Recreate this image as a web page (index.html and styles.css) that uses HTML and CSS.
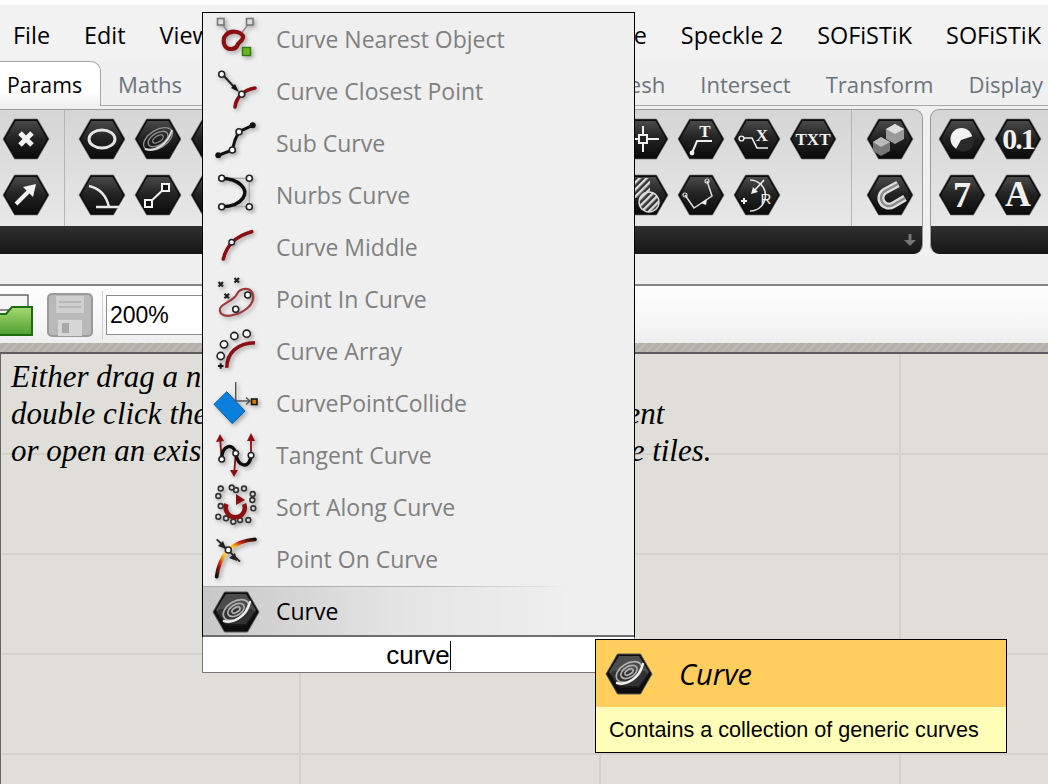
FILE: index.html
```html
<!DOCTYPE html>
<html lang="en">
<head>
    <meta charset="UTF-8">
    <title>Grasshopper</title>
    <link rel="stylesheet" href="styles.css">
</head>
<body>

    <svg class="defs" width="0" height="0">
        <defs>
            <linearGradient id="hexFill" x1="0" y1="0" x2="0" y2="1">
                <stop offset="0" stop-color="#4a4a4a"/>
                <stop offset="0.45" stop-color="#242424"/>
                <stop offset="1" stop-color="#0c0c0c"/>
            </linearGradient>
            <linearGradient id="folderFill" x1="0" y1="0" x2="0" y2="1">
                <stop offset="0" stop-color="#a6d873"/>
                <stop offset="1" stop-color="#4f9f31"/>
            </linearGradient>
            <linearGradient id="hotA" x1="0" y1="1" x2="1" y2="0">
                <stop offset="0" stop-color="#111"/>
                <stop offset="0.35" stop-color="#c21a10"/>
                <stop offset="0.65" stop-color="#f7b013"/>
                <stop offset="1" stop-color="#fff8c0"/>
            </linearGradient>
            <linearGradient id="hotB" x1="0" y1="1" x2="1" y2="0">
                <stop offset="0" stop-color="#fff8c0"/>
                <stop offset="0.3" stop-color="#f7b013"/>
                <stop offset="0.6" stop-color="#c21a10"/>
                <stop offset="1" stop-color="#111"/>
            </linearGradient>
            <pattern id="hatch" width="5" height="5" patternUnits="userSpaceOnUse" patternTransform="rotate(-45)">
                <rect width="5" height="5" fill="#333"/>
                <rect width="5" height="2.4" fill="#ddd"/>
            </pattern>
            <symbol id="hex" viewBox="0 0 48 42">
                <polygon points="1,21 12.5,1 35.5,1 47,21 35.5,41 12.5,41" fill="#0b0b0b" stroke="#6d6d6d" stroke-width="1" stroke-linejoin="round" stroke-opacity=".6"/>
                <polygon points="3,21 13.5,3 34.5,3 45,21 34.5,39 13.5,39" fill="url(#hexFill)"/>
            </symbol>
            <symbol id="curveHex" viewBox="0 0 48 42">
                <polygon points="1,21 12.5,1 35.5,1 47,21 35.5,41 12.5,41" fill="#0d0d0d" stroke="#555" stroke-width="1" stroke-linejoin="round"/>
                <polygon points="4,19 14,3 34,3 44,19 34,33 14,33" fill="#4c4c4c"/>
                <polygon points="4,22 14,35 34,35 44,22 40,18 8,18" fill="#222" opacity=".6"/>
                <g fill="none" stroke="#b0b0b0" stroke-width="1.7" transform="rotate(-32 24 19)">
                    <ellipse cx="24" cy="19" rx="14" ry="8.5"/>
                    <ellipse cx="24" cy="19" rx="9" ry="5.4"/>
                    <ellipse cx="24" cy="19" rx="4.5" ry="2.4"/>
                </g>
                <path d="M12 30 C22 33 34 25 38 11" fill="none" stroke="#f0f0f0" stroke-width="2.4" stroke-linecap="round"/>
            </symbol>
        </defs>
    </svg>

    <div class="top-strip"></div>

    <div class="menubar">
        <span>File</span>
        <span>Edit</span>
        <span>View</span>
        <span class="menu-right">e</span>
        <span>Speckle 2</span>
        <span>SOFiSTiK</span>
        <span>SOFiSTiK</span>
    </div>

    <div class="tabs">
        <span class="tab active">Params</span>
        <span class="tab">Maths</span>
        <span class="tab tab-right">Mesh</span>
        <span class="tab">Intersect</span>
        <span class="tab">Transform</span>
        <span class="tab">Display</span>
    </div>

    <div class="ribbon">
        <div class="panel panel-main">
            <div class="panel-body">
                <div class="group group-first">
                    <svg class="hex" viewBox="0 0 48 42"><use href="#hex"/><path d="M18 15 L30 27 M30 15 L18 27" stroke="#f2f2f2" stroke-width="5"/></svg>
                    <svg class="hex" viewBox="0 0 48 42"><use href="#hex"/><path d="M14 30 L29 15" stroke="#f2f2f2" stroke-width="4"/><polygon points="34,10 31,23 21,13" fill="#f2f2f2"/></svg>
                </div>
                <div class="group group-sep">
                    <svg class="hex" viewBox="0 0 48 42"><use href="#hex"/><ellipse cx="24" cy="21" rx="13" ry="9" fill="none" stroke="#e4e4e4" stroke-width="3"/></svg>
                    <svg class="hex" viewBox="0 0 48 42"><use href="#hex"/><path d="M11 12 C20 14 28 20 31 33 M18 33 H43" fill="none" stroke="#e8e8e8" stroke-width="2.5"/></svg>
                    <svg class="hex" viewBox="0 0 48 42"><use href="#hex"/><g fill="none" stroke="#8f8f8f" stroke-width="1.3" transform="rotate(-32 24 21)"><ellipse cx="24" cy="21" rx="16" ry="9"/><ellipse cx="24" cy="21" rx="11" ry="6"/><ellipse cx="24" cy="21" rx="6" ry="3"/></g><path d="M11 31 C22 34 34 26 38 12" fill="none" stroke="#ddd" stroke-width="2"/></svg>
                    <svg class="hex" viewBox="0 0 48 42"><use href="#hex"/><path d="M15 29 L31 14" stroke="#f2f2f2" stroke-width="2"/><rect x="11" y="26" width="7" height="7" fill="#111" stroke="#f2f2f2" stroke-width="2"/><rect x="28" y="10" width="7" height="7" fill="#111" stroke="#f2f2f2" stroke-width="2"/></svg>
                    <svg class="hex" viewBox="0 0 48 42"><use href="#hex"/></svg>
                    <svg class="hex" viewBox="0 0 48 42"><use href="#hex"/></svg>
                </div>
                <div class="group group-tail">
                    <svg class="hex" viewBox="0 0 48 42"><use href="#hex"/><path d="M22 8 V34 M8 21 H38" stroke="#eee" stroke-width="2"/><rect x="18" y="17" width="8" height="8" fill="#222" stroke="#eee" stroke-width="2"/></svg>
                    <svg class="hex" viewBox="0 0 48 42"><use href="#hex"/><rect x="12" y="4" width="17" height="20" fill="url(#hatch)"/><circle cx="28" cy="28" r="10" fill="url(#hatch)" stroke="#ddd" stroke-width="1.4"/></svg>
                    <svg class="hex" viewBox="0 0 48 42"><use href="#hex"/><path d="M15 35 L20 23 H35" fill="none" stroke="#eee" stroke-width="2"/><circle cx="15" cy="35" r="2.4" fill="#eee"/><text x="28" y="19" class="glyph glyph-t">T</text></svg>
                    <svg class="hex" viewBox="0 0 48 42"><use href="#hex"/><path d="M30 7 L35 22 L17 34 L8 21" fill="none" stroke="#ddd" stroke-width="1.5"/><circle cx="30" cy="7" r="2" fill="none" stroke="#ddd" stroke-width="1.2"/><circle cx="8" cy="21" r="2" fill="none" stroke="#ddd" stroke-width="1.2"/><polygon points="24,29 30,25 29,31" fill="#eee"/></svg>
                    <svg class="hex" viewBox="0 0 48 42"><use href="#hex"/><path d="M11 20 H19 L24 30 H35" fill="none" stroke="#eee" stroke-width="1.6"/><circle cx="8.5" cy="20.5" r="2.4" fill="none" stroke="#eee" stroke-width="1.4"/><text x="29" y="23" class="glyph glyph-t">X</text></svg>
                    <svg class="hex" viewBox="0 0 48 42"><use href="#hex"/><path d="M17 6 A15 15 0 0 1 17 37" fill="none" stroke="#ddd" stroke-width="1.6"/><path d="M31 6 L21 17" stroke="#eee" stroke-width="1.6"/><polygon points="18,20 20,13 25,18" fill="#eee"/><path d="M8 27 H14 M11 24 V30" stroke="#eee" stroke-width="2"/><text x="33" y="30" class="glyph glyph-r">R</text></svg>
                    <svg class="hex" viewBox="0 0 48 42"><use href="#hex"/><text x="24" y="27" class="glyph glyph-txt">TXT</text></svg>
                </div>
                <div class="group group-one">
                    <svg class="hex" viewBox="0 0 48 42"><use href="#hex"/><polygon points="29,6 38,11 38,21 29,26 20,21 20,11" fill="#9a9a9a"/><polygon points="29,6 38,11 29,16 20,11" fill="#ddd"/><polygon points="15,19 24,24 24,33 15,38 7,33 7,24" fill="#777"/><polygon points="15,19 24,24 15,29 7,24" fill="#bbb"/></svg>
                    <svg class="hex" viewBox="0 0 48 42"><use href="#hex"/><path d="M32 10 L19 17 A8 8 0 0 0 27 31 L39 24" fill="none" stroke="#ddd" stroke-width="7"/><path d="M32 10 L19 17 A8 8 0 0 0 27 31 L39 24" fill="none" stroke="#8a8a8a" stroke-width="2.5"/></svg>
                </div>
            </div>
            <div class="panel-foot">
                <svg class="foot-arrow" viewBox="0 0 14 14"><path d="M7 1 V8" stroke="#777" stroke-width="3"/><polygon points="1,7 13,7 7,13" fill="#777"/></svg>
            </div>
        </div>
        <div class="panel panel-input">
            <div class="panel-body">
                <div class="group">
                    <svg class="hex" viewBox="0 0 48 42"><use href="#hex"/><circle cx="23.5" cy="21" r="11" fill="#f2f2f2"/><path d="M35 18 L23 22 L18 31 A11 11 0 0 0 35 18 Z" fill="#2a2a2a"/></svg>
                    <svg class="hex" viewBox="0 0 48 42"><use href="#hex"/><text x="24" y="33" class="glyph glyph-big">7</text></svg>
                    <svg class="hex" viewBox="0 0 48 42"><use href="#hex"/><text x="24" y="31" class="glyph glyph-num">0.1</text></svg>
                    <svg class="hex" viewBox="0 0 48 42"><use href="#hex"/><text x="24" y="32" class="glyph glyph-big">A</text></svg>
                </div>
            </div>
            <div class="panel-foot"></div>
        </div>
    </div>

    <div class="toolbar">
        <svg class="tool-icon folder" viewBox="0 0 36 42">
            <path d="M-4 1 H30 V16 H-4 Z" fill="#f6f6f6" stroke="#666" stroke-width="1.5"/>
            <path d="M-4 20 H8 L14 13 H34 V41 H-4 Z" fill="url(#folderFill)" stroke="#1d6b12" stroke-width="2"/>
        </svg>
        <svg class="tool-icon save" viewBox="0 0 46 44">
            <rect x="1" y="1" width="44" height="42" rx="4" fill="#b9b9b9" stroke="#9a9a9a" stroke-width="2"/>
            <rect x="9" y="3" width="28" height="17" fill="#cfcfcf"/>
            <path d="M12 9 H34 M12 14 H34" stroke="#b0b0b0" stroke-width="1.5"/>
            <rect x="11" y="27" width="24" height="16" fill="#d6d6d6"/>
            <rect x="15" y="30" width="7" height="10" fill="#a8a8a8"/>
        </svg>
        <div class="tool-sep"></div>
        <div class="zoom-box">200%</div>
    </div>
    <div class="hatch"></div>

    <div class="canvas">
        <p class="hint">Either drag a new component onto the canvas,</p>
        <p class="hint">double click the canvas to find and add a component</p>
        <p class="hint">or open an existing document by dropping it on the tiles.</p>
    </div>

    <div class="finder">
        <div class="results">
            <div class="result">
                <svg class="result-icon" viewBox="0 0 48 48">
                    <path d="M8 7 L17 20 M37 7 L27 20" stroke="#8d8d8d" stroke-width="1.5"/>
                    <rect x="4.5" y="3.5" width="6.5" height="6.5" fill="#ddd" stroke="#777" stroke-width="1.6"/>
                    <rect x="33.5" y="3.5" width="6.5" height="6.5" fill="#ddd" stroke="#777" stroke-width="1.6"/>
                    <path d="M18 34 C10 34 9 24 13 20 C17 15 27 16 30 21 C31 25 26 27 25 29 C24 32 22 34 18 34 Z" fill="none" stroke="#8a0f12" stroke-width="4.2"/>
                    <rect x="29.5" y="32.5" width="8" height="8" fill="#6fb51e" stroke="#2f7a10" stroke-width="1.4"/>
                </svg>
                <span>Curve Nearest Object</span>
            </div>
            <div class="result">
                <svg class="result-icon" viewBox="0 0 48 48">
                    <path d="M9 7 L23 22" stroke="#222" stroke-width="2"/>
                    <polygon points="26,25 18,21 22,17" fill="#111"/>
                    <path d="M22 40 C23 31 30 23 42 21" fill="none" stroke="#8a0f12" stroke-width="3.6" stroke-linecap="round"/>
                    <circle cx="8.7" cy="7.3" r="3" fill="#fff" stroke="#222" stroke-width="1.6"/>
                    <circle cx="28.7" cy="27.3" r="3" fill="#fff" stroke="#222" stroke-width="1.6"/>
                </svg>
                <span>Curve Closest Point</span>
            </div>
            <div class="result">
                <svg class="result-icon" viewBox="0 0 48 48">
                    <path d="M5.3 36.3 L19.3 31 L22 21 L26 12.7 L39.7 6.3" fill="none" stroke="#111" stroke-width="3"/>
                    <circle cx="5.3" cy="36.3" r="3" fill="#111"/>
                    <circle cx="39.7" cy="6.3" r="3" fill="#111"/>
                    <circle cx="19.3" cy="31" r="3" fill="#fff" stroke="#222" stroke-width="1.6"/>
                    <circle cx="26" cy="12.7" r="3" fill="#fff" stroke="#222" stroke-width="1.6"/>
                </svg>
                <span>Sub Curve</span>
            </div>
            <div class="result">
                <svg class="result-icon" viewBox="0 0 48 48">
                    <path d="M8.7 7.3 H36.3 V35.7 H8.7" fill="none" stroke="#a5a5a5" stroke-width="1.2"/>
                    <path d="M8.7 7.3 C26 8 36 18 30 27 C26 33 17 35.7 8.7 35.7" fill="none" stroke="#0c0c0c" stroke-width="3.4"/>
                    <circle cx="8.7" cy="7.3" r="3" fill="#fff" stroke="#222" stroke-width="1.6"/>
                    <circle cx="36.3" cy="7.3" r="3" fill="#fff" stroke="#222" stroke-width="1.6"/>
                    <circle cx="8.7" cy="35.7" r="3" fill="#fff" stroke="#222" stroke-width="1.6"/>
                    <circle cx="36.3" cy="35.7" r="3" fill="#fff" stroke="#222" stroke-width="1.6"/>
                </svg>
                <span>Nurbs Curve</span>
            </div>
            <div class="result">
                <svg class="result-icon" viewBox="0 0 48 48">
                    <path d="M10.3 36 C13 24 22 13 38.7 8.7" fill="none" stroke="#8a0f12" stroke-width="3.6" stroke-linecap="round"/>
                    <circle cx="18.7" cy="19.3" r="2.8" fill="#fff" stroke="#222" stroke-width="1.5"/>
                </svg>
                <span>Curve Middle</span>
            </div>
            <div class="result">
                <svg class="result-icon" viewBox="0 0 48 48">
                    <path d="M5.5 6 L10 10.5 M10 6 L5.5 10.5 M21.5 2 L26 6.5 M26 2 L21.5 6.5 M11.5 17.8 L16 22.3 M16 17.8 L11.5 22.3" stroke="#222" stroke-width="2.2"/>
                    <path d="M7 33 C8 27 20 26 24 18 C27 12 38 10 40 19 C42 29 30 37 20 39 C13 41 6 39 7 33 Z" fill="none" stroke="#9c3a3c" stroke-width="2.2"/>
                    <circle cx="34.7" cy="19" r="3" fill="#fff" stroke="#222" stroke-width="1.6"/>
                    <circle cx="22.7" cy="33.3" r="3" fill="#fff" stroke="#222" stroke-width="1.6"/>
                </svg>
                <span>Point In Curve</span>
            </div>
            <div class="result">
                <svg class="result-icon" viewBox="0 0 48 48">
                    <path d="M13.7 39.7 C14 25 24 15 42 14.7" fill="none" stroke="#8a0f12" stroke-width="3.6"/>
                    <circle cx="7.7" cy="28" r="3.6" fill="#fff" stroke="#222" stroke-width="1.6"/>
                    <circle cx="11" cy="16.3" r="3.6" fill="#fff" stroke="#222" stroke-width="1.6"/>
                    <circle cx="21.3" cy="8" r="3.6" fill="#fff" stroke="#222" stroke-width="1.6"/>
                    <circle cx="33.7" cy="5.7" r="3.6" fill="#fff" stroke="#222" stroke-width="1.6"/>
                    <path d="M5 38 H10.5 M7.7 35.3 V40.7" stroke="#111" stroke-width="2"/>
                </svg>
                <span>Curve Array</span>
            </div>
            <div class="result">
                <svg class="result-icon" viewBox="0 0 48 48">
                    <polygon points="1,24.3 13.7,11.7 32,31 19.3,43.7" fill="#0a7fdc" stroke="#0b5ea3" stroke-width="1"/>
                    <path d="M22.7 2 V21 H37 M33 17.5 L37 21 L33 24.5" fill="none" stroke="#555" stroke-width="1.4"/>
                    <rect x="38.5" y="19" width="5.5" height="5.5" fill="#d97a0c" stroke="#111" stroke-width="1.5"/>
                </svg>
                <span>CurvePointCollide</span>
            </div>
            <div class="result">
                <svg class="result-icon" viewBox="0 0 48 48">
                    <path d="M7 5 L8.7 27 M38 3 V23 M22.7 21 L21.3 41" stroke="#8a0f12" stroke-width="1.8"/>
                    <polygon points="7,2 3,10 11,9" fill="#8a0f12"/>
                    <polygon points="38,1 34,9 42,9" fill="#8a0f12"/>
                    <polygon points="21,45 17,38 25,38" fill="#8a0f12"/>
                    <path d="M8.7 27.3 C9 12 21 11 22.7 21.3 C24 35 37 38 38 23.3" fill="none" stroke="#0c0c0c" stroke-width="3.4"/>
                    <circle cx="8.7" cy="27.3" r="2.8" fill="#fff" stroke="#222" stroke-width="1.5"/>
                    <circle cx="22.7" cy="21.3" r="2.8" fill="#fff" stroke="#222" stroke-width="1.5"/>
                    <circle cx="38" cy="23.3" r="2.8" fill="#fff" stroke="#222" stroke-width="1.5"/>
                </svg>
                <span>Tangent Curve</span>
            </div>
            <div class="result">
                <svg class="result-icon" viewBox="0 0 48 48">
                    <g fill="#ddd" stroke="#333" stroke-width="1.6">
                        <circle cx="7.7" cy="4.5" r="2.4"/><circle cx="5.3" cy="12" r="2.4"/><circle cx="7.7" cy="22" r="2.4"/><circle cx="5.3" cy="32.7" r="2.4"/><circle cx="13" cy="34.3" r="2.4"/><circle cx="20.3" cy="37.7" r="2.4"/><circle cx="27" cy="36" r="2.4"/><circle cx="35.3" cy="36" r="2.4"/><circle cx="40.3" cy="24.3" r="2.4"/><circle cx="39.3" cy="16" r="2.4"/><circle cx="39.7" cy="10" r="2.4"/><circle cx="31" cy="4.5" r="2.4"/><circle cx="23" cy="6" r="2.4"/><circle cx="18.7" cy="3.5" r="2.4"/>
                    </g>
                    <path d="M13.5 20 A9.5 9.5 0 1 0 31 20" fill="none" stroke="#8a0f12" stroke-width="4.6"/>
                    <polygon points="23,10 32,16 23,21" fill="#8a0f12"/>
                </svg>
                <span>Sort Along Curve</span>
            </div>
            <div class="result">
                <svg class="result-icon" viewBox="0 0 48 48">
                    <path d="M3.7 40.7 C5 30 9 21 15.3 14" fill="none" stroke="url(#hotA)" stroke-width="3.8" stroke-linecap="round"/>
                    <path d="M15.3 14 C22 8 32 4 42 3.3" fill="none" stroke="url(#hotB)" stroke-width="3.8" stroke-linecap="round"/>
                    <path d="M3.7 3.3 L27 25.7" stroke="#222" stroke-width="1.8"/>
                    <polygon points="10,5 13,13 5,10" fill="#222"/>
                    <polygon points="22,17 24,25 16,22" fill="#222"/>
                    <circle cx="15.3" cy="14" r="3" fill="#fff" stroke="#222" stroke-width="1.5"/>
                </svg>
                <span>Point On Curve</span>
            </div>
            <div class="result selected">
                <svg class="result-icon" viewBox="0 0 48 42"><use href="#curveHex"/></svg>
                <span>Curve</span>
            </div>
        </div>
        <div class="search">curve<span class="caret"></span></div>
    </div>

    <div class="tip">
        <div class="tip-head">
            <svg class="tip-icon" viewBox="0 0 48 42"><use href="#curveHex"/></svg>
            <span class="tip-title">Curve</span>
        </div>
        <div class="tip-body">Contains a collection of generic curves</div>
    </div>

</body>
</html>
```

FILE: styles.css
```css
html, body {
    height: 100%;
}
body {
    margin: 0;
    position: relative;
    overflow: hidden;
    background-color: #f0f0f0;
    font-family: "Open Sans", sans-serif;
    color: #000;
    display: flex;
    flex-direction: column;
}
.defs {
    display: block;
    flex: none;
}
.top-strip {
    height: 5px;
    background-color: #fff;
    flex: none;
}

/* menu + tabs */
.menubar {
    height: 55px;
    flex: none;
    display: flex;
    align-items: center;
    gap: 34px;
    padding: 4px 7px 0 13px;
    box-sizing: border-box;
    font-size: 23.4px;
    background-color: #f2f2f2;
    white-space: nowrap;
}
.menu-right {
    margin-left: auto;
}
.tabs {
    height: 46px;
    flex: none;
    display: flex;
    align-items: center;
    gap: 35px;
    font-size: 22.1px;
    color: #6c747c;
    border-bottom: 1px solid #a8a8a8;
    box-sizing: border-box;
    white-space: nowrap;
    padding: 3px 5px 0 0;
}
.tab-right {
    margin-left: auto;
}
.tab.active {
    color: #000;
    font-size: 21.3px;
    align-self: stretch;
    display: flex;
    align-items: center;
    width: 101px;
    box-sizing: border-box;
    padding: 0 0 0 7px;
    margin: -2px -18px -1px 0;
    background: linear-gradient(#fff 70%, #efefef);
    border: 1px solid #a8a8a8;
    border-left: none;
    border-bottom: none;
    border-radius: 0 10px 0 0;
}

/* ribbon */
.ribbon {
    flex: none;
    display: flex;
    gap: 7px;
    margin-top: 3px;
    height: 145px;
}
.panel {
    flex: none;
    display: flex;
    flex-direction: column;
    border: 1px solid #9a9a9a;
    border-bottom: none;
    border-radius: 9px;
    box-sizing: border-box;
    overflow: hidden;
    background: linear-gradient(#d5d5d5, #ececec);
}
.panel-main {
    width: 933px;
    margin-left: -10px;
}
.panel-input {
    width: 140px;
}
.panel-body {
    flex: 1;
    display: flex;
}
.panel-main .panel-body {
    padding-left: 11px;
}
.panel-input .panel-body {
    padding-left: 7px;
}
.group {
    display: grid;
    grid-template-rows: 42px 42px;
    grid-auto-flow: column;
    grid-auto-columns: 48px;
    column-gap: 8px;
    row-gap: 14px;
    padding-top: 8px;
}
.group-first {
    padding-right: 14px;
    border-right: 1px solid #b5b5b5;
}
.group-sep {
    padding-left: 13px;
}
.group-tail {
    margin-left: auto;
    padding-right: 14px;
    border-right: 1px solid #b5b5b5;
}
.group-one {
    padding-left: 14px;
    padding-right: 8px;
}
.hex {
    display: block;
    width: 48px;
    height: 42px;
}
.panel-foot {
    height: 28px;
    flex: none;
    display: flex;
    align-items: center;
    justify-content: flex-end;
    padding-right: 5px;
    background: linear-gradient(#303030, #161616);
}
.foot-arrow {
    width: 14px;
    height: 14px;
}
.glyph {
    fill: #f0f0f0;
    font-family: "Liberation Serif", serif;
    font-weight: bold;
    text-anchor: middle;
}
.glyph-t {
    font-size: 17px;
}
.glyph-txt {
    font-size: 17px;
}
.glyph-r {
    font-size: 15px;
    font-family: "Liberation Sans", sans-serif;
    font-weight: normal;
}
.glyph-num {
    font-size: 30px;
    letter-spacing: -2px;
}
.glyph-big {
    font-size: 36px;
}

/* toolbar */
.toolbar {
    flex: none;
    margin-top: 30px;
    height: 59px;
    display: flex;
    align-items: center;
    box-sizing: border-box;
    border-top: 2px solid #858585;
    background: linear-gradient(#fefefe, #f6f6f6 70%, #ededed);
}
.tool-icon {
    display: block;
    flex: none;
}
.folder {
    width: 36px;
    height: 42px;
    margin-left: -2px;
}
.save {
    width: 46px;
    height: 44px;
    margin-left: 13px;
}
.tool-sep {
    width: 1px;
    height: 48px;
    margin-left: 9px;
    background-color: #d0d0d0;
    flex: none;
}
.zoom-box {
    width: 200px;
    height: 40px;
    margin-left: 3px;
    box-sizing: border-box;
    background-color: #fff;
    border: 1px solid #8c8c8c;
    font-family: "Liberation Sans", sans-serif;
    font-size: 23px;
    line-height: 38px;
    padding-left: 3px;
    flex: none;
}
.hatch {
    flex: none;
    height: 9px;
    background-color: #b3b1aa;
    background-image:
        repeating-linear-gradient(135deg, rgba(255,255,255,.13) 0 2px, transparent 2px 6px);
}

/* canvas */
.canvas {
    flex: 1;
    border-top: 2px solid #5c5c5c;
    border-left: 1px solid #666;
    padding: 4px 0 0 10px;
    background-color: #dfded9;
    background-image:
        repeating-linear-gradient(90deg, transparent 0 298px, #d2d1cc 298px 300px),
        repeating-linear-gradient(180deg, transparent 0 98px, #d2d1cc 98px 100px);
    background-position: 0 0, 0 1px;
}
.hint {
    margin: 0;
    font-family: "Liberation Serif", serif;
    font-style: italic;
    font-size: 31px;
    line-height: 37.2px;
    white-space: nowrap;
}

/* component finder popup */
.finder {
    position: absolute;
    left: 202px;
    top: 12px;
    width: 433px;
}
.results {
    border: 1px solid #000;
    border-bottom: none;
    background-color: #efefef;
    overflow: hidden;
}
.result {
    height: 52.1px;
    display: flex;
    align-items: center;
    padding-left: 10px;
    gap: 15px;
    font-size: 23px;
    color: #808080;
    white-space: nowrap;
}
.result span {
    margin-top: -1px;
}
.result-icon {
    width: 48px;
    height: 48px;
    flex: none;
    filter: drop-shadow(2px 2px 2px rgba(0,0,0,.3));
}
.result.selected {
    height: 51px;
    color: #000;
    background:
        linear-gradient(90deg, #aaa, #b5b5b5 50%, rgba(200,200,200,0) 85%) top / 100% 1px no-repeat,
        linear-gradient(90deg, #c8c8c8, #e4e4e4 45%, #efefef 85%);
    box-shadow: inset 0 -2px 0 #6e6e6e;
}
.result.selected .result-icon {
    height: 42px;
    margin-left: -1px;
    margin-right: 1px;
    filter: none;
}
.search {
    height: 36px;
    box-sizing: border-box;
    background-color: #fff;
    border: 1px solid #777;
    border-top: none;
    text-align: center;
    font-family: "Liberation Sans", sans-serif;
    font-size: 26px;
    line-height: 36px;
}
.caret {
    display: inline-block;
    width: 1px;
    height: 29px;
    background-color: #000;
    vertical-align: -6px;
}

/* tooltip */
.tip {
    position: absolute;
    left: 595px;
    top: 639px;
    width: 412px;
    box-sizing: border-box;
    border: 1px solid #000;
    background-color: #ffffb9;
}
.tip-head {
    height: 67px;
    display: flex;
    align-items: center;
    background-color: #ffce5c;
    padding-left: 9px;
    gap: 26px;
}
.tip-icon {
    width: 48px;
    height: 42px;
    flex: none;
}
.tip-title {
    font-size: 29px;
    font-style: italic;
}
.tip-body {
    height: 45px;
    padding-left: 13px;
    font-family: "Liberation Sans", sans-serif;
    font-size: 21.6px;
    line-height: 45px;
    white-space: nowrap;
}
```
